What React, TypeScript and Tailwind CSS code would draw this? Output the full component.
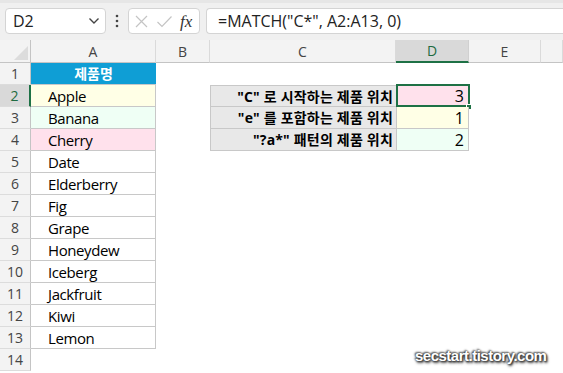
import React from "react";

const font = { fontFamily: '"Open Sans", "Noto Sans CJK KR", sans-serif' };

const fruits = [
  "Apple",
  "Banana",
  "Cherry",
  "Date",
  "Elderberry",
  "Fig",
  "Grape",
  "Honeydew",
  "Iceberg",
  "Jackfruit",
  "Kiwi",
  "Lemon",
];

const aBg: Record<number, string> = {
  0: "bg-[#ffffe6]",
  1: "bg-[#effff5]",
  2: "bg-[#ffe1ec]",
};

const summary = [
  { label: '"C" 로 시작하는 제품 위치', value: "3", bg: "bg-[#ffe1ec]" },
  { label: '"e" 를 포함하는 제품 위치', value: "1", bg: "bg-[#ffffe6]" },
  { label: '"?a*" 패턴의 제품 위치', value: "2", bg: "bg-[#effff5]" },
];

function RowHeader({ n }: { n: number }) {
  const sel = n === 2;
  return (
    <div
      className={`flex items-center justify-center text-[14px] border-b border-[#dcdcdc] ${
        sel
          ? "bg-[#d9d9d9] text-[#1e6b41] border-r-2 border-r-[#1e7145]"
          : "bg-[#f3f3f3] text-[#444] border-r border-r-[#c4c4c4]"
      }`}
    >
      {n}
    </div>
  );
}

export default function App() {
  const rows = [];
  for (let r = 1; r <= 14; r++) {
    const cells = [];
    cells.push(<RowHeader key="h" n={r} />);
    if (r === 1) {
      cells.push(
        <div
          key="a"
          className="bg-[#0f9ed5] text-white font-bold text-[14px] flex items-center justify-center border-b border-[#c8c8c8]"
        >
          제품명
        </div>
      );
    } else if (r <= 13) {
      cells.push(
        <div
          key="a"
          className={`${aBg[r - 2] ?? "bg-white"} text-[15px] tracking-[-0.4px] text-black flex items-center pl-[17px] pt-[1px] border-b border-r border-[#c8c8c8]`}
        >
          {fruits[r - 2]}
        </div>
      );
    } else {
      cells.push(<div key="a" className="bg-white" />);
    }
    cells.push(<div key="b" className="bg-white" />);
    if (r >= 2 && r <= 4) {
      const s = summary[r - 2];
      cells.push(
        <div
          key="c"
          className={`bg-[#e8e8e8] font-bold text-[14px] tracking-[0.2px] text-black flex items-center justify-end pr-[3px] border-b border-l border-[#c8c8c8] ${
            r === 2 ? "border-t" : ""
          }`}
        >
          {s.label}
        </div>
      );
      cells.push(
        <div
          key="d"
          className={`relative ${s.bg} text-[16px] text-black flex items-center justify-end pr-[4px] border-b border-r border-l border-[#c8c8c8] ${
            r === 2 ? "border-t" : ""
          }`}
        >
          {s.value}
          {r === 2 && (
            <>
              <div className="absolute left-[-1px] top-[-2px] right-[-2px] bottom-[-1px] border-2 border-[#1e7145]" />
              <div className="absolute right-[-4px] bottom-[-4px] w-[6px] h-[6px] bg-[#1e7145] border border-white" />
            </>
          )}
        </div>
      );
    } else {
      cells.push(<div key="c" className="bg-white" />);
      cells.push(<div key="d" className="bg-white" />);
    }
    cells.push(<div key="e" className="bg-white" />);
    cells.push(<div key="f" className="bg-white" />);
    rows.push(...cells.map((c, i) => React.cloneElement(c, { key: `${r}-${i}` })));
  }

  const colHeaders = ["A", "B", "C", "D", "E", ""];

  return (
    <div
      className="relative w-[563px] h-[373px] overflow-hidden bg-white"
      style={font}
    >
      {/* Toolbar */}
      <div className="h-[40px] bg-[#f0f0f0] border-t-[3px] border-[#e6e6e6] flex items-start pt-[5px] pl-[5px]">
        <div className="w-[101px] h-[26px] bg-white border border-[#d4d4d4] rounded-[4px] flex items-center justify-between pl-[7px] pr-[5px]">
          <span className="text-[16px] text-[#222]">D2</span>
          <svg width="12" height="8" viewBox="0 0 12 8" fill="none">
            <path d="M1.5 1.5 L6 6 L10.5 1.5" stroke="#444" strokeWidth="1.4" />
          </svg>
        </div>
        <div className="w-[22px] h-[26px] flex items-center justify-center">
          <svg width="4" height="14" viewBox="0 0 4 14">
            <circle cx="2" cy="2" r="1.3" fill="#444" />
            <circle cx="2" cy="7" r="1.3" fill="#444" />
            <circle cx="2" cy="12" r="1.3" fill="#444" />
          </svg>
        </div>
        <div className="w-[72px] h-[26px] bg-white border border-[#d4d4d4] rounded-[4px] flex items-center pl-[5px] gap-[7px]">
          <svg width="15" height="15" viewBox="0 0 15 15" fill="none">
            <path d="M2 2 L13 13 M13 2 L2 13" stroke="#c4c4c4" strokeWidth="1.2" />
          </svg>
          <svg width="17" height="15" viewBox="0 0 17 15" fill="none">
            <path d="M1.5 8 L6 12.5 L15.5 2.5" stroke="#c4c4c4" strokeWidth="1.2" />
          </svg>
          <span
            className="text-[17px] italic text-[#333] leading-none"
            style={{ fontFamily: '"Liberation Serif", serif' }}
          >
            fx
          </span>
        </div>
        <div className="w-[6px]" />
        <div className="flex-1 h-[26px] bg-white border border-[#d4d4d4] border-r-0 rounded-l-[4px] flex items-center pl-[11px]">
          <span className="text-[16px] text-[#222]">=MATCH("C*", A2:A13, 0)</span>
        </div>
      </div>

      {/* Grid */}
      <div className="grid grid-cols-[31px_125px_54px_186px_73px_72px_1fr] grid-rows-[23px_repeat(14,22px)]">
        <div className="bg-[#f3f3f3] border-r border-b border-[#c4c4c4] relative flex items-end justify-end pr-[2px] pb-[2px]">
          <svg width="14" height="14" viewBox="0 0 14 14">
            <path d="M14 0 L14 14 L0 14 Z" fill="#dcdcdc" />
          </svg>
        </div>
        {colHeaders.map((h, i) =>
          h === "D" ? (
            <div
              key={h}
              className="bg-[#d9d9d9] text-[#1e6b41] text-[14px] flex items-center justify-center border-b-2 border-[#1e7145] border-r border-r-[#d0d0d0]"
            >
              {h}
            </div>
          ) : (
            <div
              key={`ch${i}`}
              className="bg-[#f3f3f3] text-[#444] text-[14px] flex items-center justify-center border-b border-b-[#c4c4c4] border-r border-r-[#dadada]"
            >
              {h}
            </div>
          )
        )}
        {rows}
      </div>

      {/* Watermark */}
      <div
        className="absolute left-[415px] top-[345px] text-white font-bold text-[15px] tracking-[-0.5px]"
        style={{
          fontFamily: '"Liberation Sans", sans-serif',
          textShadow:
            "0 0 2px #333, 1px 1px 2px #333, -1px -1px 2px #555, 1px 2px 3px #444",
        }}
      >
        secstart.tistory.com
      </div>
    </div>
  );
}
